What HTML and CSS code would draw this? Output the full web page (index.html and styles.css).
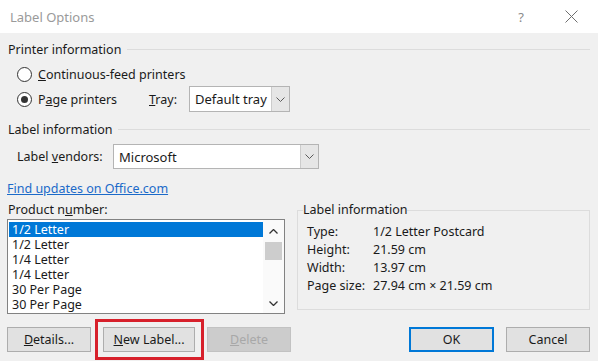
FILE: index.html
```html
<!DOCTYPE html>
<html lang="en">
<head>
    <meta charset="UTF-8">
    <title>Label Options</title>
    <link rel="stylesheet" href="styles.css">
</head>
<body>
    <div class="dialog">
        <div class="titlebar">
            <span class="title">Label Options</span>
            <span class="help">?</span>
            <svg class="close" width="13" height="13" viewBox="0 0 13 13">
                <path d="M0.5 0.5 L12.5 12.5 M12.5 0.5 L0.5 12.5" stroke="#6e6e6e" stroke-width="1" fill="none"/>
            </svg>
        </div>

        <div class="content">
            <div class="section-head">
                <span>Printer information</span>
                <span class="rule"></span>
            </div>

            <div class="radio-row first">
                <span class="radio"></span>
                <span><u>C</u>ontinuous-feed printers</span>
            </div>
            <div class="radio-row">
                <span class="radio checked"></span>
                <span class="page-label">P<u>a</u>ge printers</span>
                <span class="tray-label"><u>T</u>ray:</span>
                <div class="combo tray">
                    <span class="combo-text">Default tray</span>
                    <span class="combo-btn">
                        <svg width="9" height="5" viewBox="0 0 9 5"><path d="M0.5 0.5 L4.5 4.5 L8.5 0.5" stroke="#5a5a5a" fill="none"/></svg>
                    </span>
                </div>
            </div>

            <div class="section-head second">
                <span>Label information</span>
                <span class="rule"></span>
            </div>

            <div class="vendor-row">
                <span class="vendor-label">Label <u>v</u>endors:</span>
                <div class="combo vendor">
                    <span class="combo-text">Microsoft</span>
                    <span class="combo-btn">
                        <svg width="9" height="5" viewBox="0 0 9 5"><path d="M0.5 0.5 L4.5 4.5 L8.5 0.5" stroke="#5a5a5a" fill="none"/></svg>
                    </span>
                </div>
            </div>

            <a class="link" href="#">Find updates on Office.com</a>

            <div class="lower">
                <div class="product">
                    <div class="product-label">Product n<u>u</u>mber:</div>
                    <div class="listbox">
                        <div class="items">
                            <div class="item selected">1/2 Letter</div>
                            <div class="item">1/2 Letter</div>
                            <div class="item">1/4 Letter</div>
                            <div class="item">1/4 Letter</div>
                            <div class="item">30 Per Page</div>
                            <div class="item">30 Per Page</div>
                        </div>
                        <div class="scrollbar">
                            <svg width="9" height="5" viewBox="0 0 9 5"><path d="M0.5 4.5 L4.5 0.5 L8.5 4.5" stroke="#333" stroke-width="1.3" fill="none"/></svg>
                            <div class="thumb"></div>
                            <div class="track"></div>
                            <svg width="9" height="5" viewBox="0 0 9 5"><path d="M0.5 0.5 L4.5 4.5 L8.5 0.5" stroke="#333" stroke-width="1.3" fill="none"/></svg>
                        </div>
                    </div>
                </div>

                <fieldset class="info">
                    <legend>Label information</legend>
                    <div class="info-row"><span class="key">Type:</span><span>1/2 Letter Postcard</span></div>
                    <div class="info-row"><span class="key">Height:</span><span>21.59 cm</span></div>
                    <div class="info-row"><span class="key">Width:</span><span>13.97 cm</span></div>
                    <div class="info-row"><span class="key">Page size:</span><span>27.94 cm × 21.59 cm</span></div>
                </fieldset>
            </div>

            <div class="buttons">
                <button class="btn details"><u>D</u>etails...</button>
                <button class="btn new-label"><u>N</u>ew Label...<span class="highlight"></span></button>
                <button class="btn delete" disabled><u>D</u>elete</button>
                <span class="spacer"></span>
                <button class="btn ok">OK</button>
                <button class="btn cancel">Cancel</button>
            </div>
        </div>
    </div>
</body>
</html>
```

FILE: styles.css
```css
body {
    margin: 0;
    font-family: 'Noto Sans', 'Open Sans', sans-serif;
    font-size: 12.5px;
    color: #1a1a1a;
    background: #f0f0f0;
}

.dialog {
    width: 598px;
    height: 361px;
    background: #f0f0f0;
    overflow: hidden;
}

.titlebar {
    height: 33px;
    background: #ffffff;
    display: flex;
    align-items: center;
}

.title {
    padding-left: 10px;
    font-size: 13px;
    color: #9a9a9a;
}

.help {
    margin-left: auto;
    font-size: 13px;
    color: #8a8a8a;
}

.close {
    margin: 0 20px 0 41px;
}

.content {
    padding: 0 8px 0 7px;
}

.section-head {
    display: flex;
    align-items: center;
    height: 16px;
    margin-top: 8px;
    padding-left: 1px;
}

.section-head.second {
    margin-top: 9px;
}

.rule {
    flex: 1;
    height: 1px;
    background: #dcdcdc;
    margin-left: 6px;
}

.radio-row {
    display: flex;
    align-items: center;
    padding-left: 10px;
    height: 26px;
    margin-top: 3px;
}

.radio-row.first {
    height: 18px;
    margin-top: 8px;
}

.radio {
    width: 13px;
    height: 13px;
    border: 1px solid #333333;
    border-radius: 50%;
    background: #ffffff;
    margin-right: 6px;
    display: flex;
    align-items: center;
    justify-content: center;
}

.radio.checked::after {
    content: "";
    width: 7px;
    height: 7px;
    border-radius: 50%;
    background: #333333;
}

.page-label {
    width: 111px;
}

.tray-label {
    width: 40px;
}

.combo {
    display: flex;
    height: 24px;
    border: 1px solid #b4b4b4;
    background: #ffffff;
    box-sizing: border-box;
}

.combo.tray {
    width: 101px;
    height: 26px;
}

.combo.vendor {
    width: 206px;
    height: 25px;
}

.combo-text {
    flex: 1;
    display: flex;
    align-items: center;
    padding-left: 5px;
    font-size: 13px;
}

.combo-btn {
    width: 17px;
    display: flex;
    align-items: center;
    justify-content: center;
    background: #e6e6e6;
    border-left: 1px solid #cccccc;
}

.vendor-row {
    display: flex;
    align-items: center;
    margin-top: 7px;
    padding-left: 10px;
}

.vendor-label {
    width: 96px;
}

.link {
    display: block;
    margin-top: 12px;
    line-height: 16px;
    color: #1b6ac9;
    text-decoration: underline;
    width: max-content;
}

.lower {
    display: flex;
    margin-top: 5px;
}

.product {
    width: 278px;
}

.product-label {
    line-height: 16px;
    padding-left: 1px;
}

.listbox {
    margin-top: 1px;
    height: 95px;
    border: 1px solid #828282;
    background: #ffffff;
    box-sizing: border-box;
    display: flex;
}

.items {
    flex: 1;
    padding: 2px 0 0 1px;
}

.item {
    height: 15px;
    line-height: 15px;
    padding-left: 3px;
}

.item.selected {
    background: #0078d7;
    color: #ffffff;
}

.scrollbar {
    width: 21px;
    display: flex;
    flex-direction: column;
    align-items: center;
    padding: 9px 0 7px;
    background: #fafafa;
}

.thumb {
    width: 17px;
    height: 18px;
    background: #cdcdcd;
    margin-top: 8px;
}

.track {
    flex: 1;
}

.info {
    flex: 1;
    margin: 0 0 0 12px;
    padding: 5px 0 0 5px;
    height: 108px;
    box-sizing: border-box;
    border: 1px solid #dcdcdc;
    min-width: 0;
}

.info legend {
    padding: 0;
    line-height: 16px;
}

.info-row {
    display: flex;
    line-height: 18px;
    padding-left: 4px;
}

.key {
    width: 66px;
}

.buttons {
    display: flex;
    margin-top: 13px;
}

.btn {
    position: relative;
    height: 25px;
    width: 84px;
    margin-right: 12px;
    padding: 0;
    font-family: inherit;
    font-size: 12.5px;
    color: #1a1a1a;
    background: #e1e1e1;
    border: 1px solid #adadad;
}

.btn.new-label {
    width: 92px;
}

.btn.delete {
    color: #a8a8a8;
    background: #cccccc;
    border-color: #c2c2c2;
}

.btn.ok {
    width: 85px;
    border: 2px solid #0078d7;
}

.btn.cancel {
    margin-right: 0;
}

.spacer {
    flex: 1;
}

.highlight {
    position: absolute;
    left: -9px;
    right: -10px;
    top: -9px;
    bottom: -9px;
    border: 3px solid #d7202b;
}
```
